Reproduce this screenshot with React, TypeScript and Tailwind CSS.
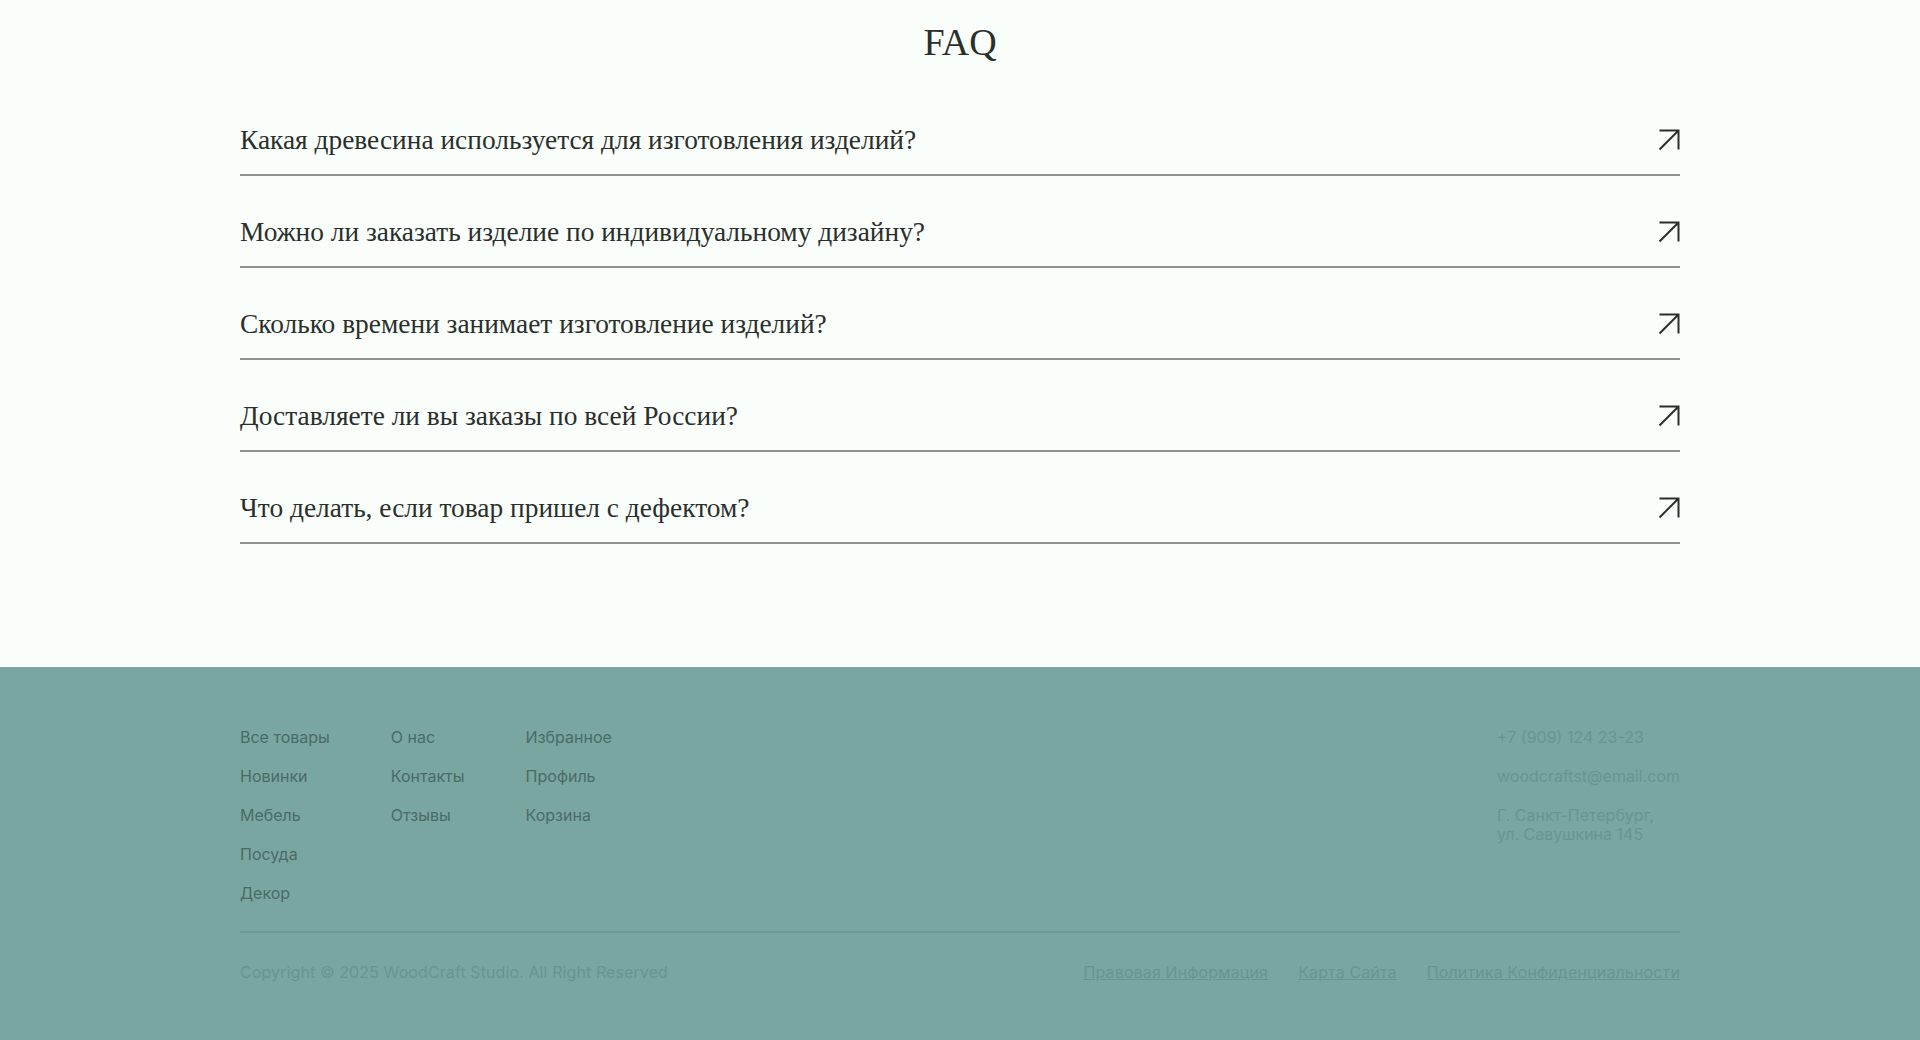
import React from 'react'

const questions = [
    'Какая древесина используется для изготовления изделий?',
    'Можно ли заказать изделие по индивидуальному дизайну?',
    'Сколько времени занимает изготовление изделий?',
    'Доставляете ли вы заказы по всей России?',
    'Что делать, если товар пришел с дефектом?',
]

const footerCols = [
    ['Все товары', 'Новинки', 'Мебель', 'Посуда', 'Декор'],
    ['О нас', 'Контакты', 'Отзывы'],
    ['Избранное', 'Профиль', 'Корзина'],
]

function ArrowIcon() {
    return (
        <svg width="22" height="22" viewBox="0 0 22 22" fill="none" className="shrink-0">
            <path d="M1.5 20.5 L20.5 1.5 M1.5 1.5 H20.5 V20.5" stroke="#2b2f2c" strokeWidth="2" />
        </svg>
    )
}

export default function App() {
    return (
        <div className="min-h-screen bg-[#f9fefa] font-['Inter',sans-serif]">
            {/* FAQ */}
            <section className="pt-5 pb-[123px]">
                <h1 className="text-center text-[38px] leading-[44px] text-[#2b2f2c] mb-5 font-['Liberation_Serif',serif]">
                    FAQ
                </h1>
                <div className="w-[1440px] mx-auto">
                    {questions.map(q => (
                        <div
                            key={q}
                            className="flex items-center justify-between pt-[40px] pb-[18px] border-b-2 border-[#8e938e]"
                        >
                            <span className="text-[27.4px] leading-[32px] text-[#2b2f2c] font-['Liberation_Serif',serif]">
                                {q}
                            </span>
                            <ArrowIcon />
                        </div>
                    ))}
                </div>
            </section>

            {/* Footer */}
            <footer className="bg-[#79a6a0] pt-[60px] pb-[60px]">
                <div className="w-[1440px] mx-auto">
                    <div className="flex justify-between">
                        <div className="flex gap-[61px]">
                            {footerCols.map((col, i) => (
                                <ul key={i} className="flex flex-col gap-[19px]">
                                    {col.map(item => (
                                        <li key={item} className="text-base leading-5 text-[#4b6b66]">
                                            {item}
                                        </li>
                                    ))}
                                </ul>
                            ))}
                        </div>
                        <div className="flex flex-col gap-[19px] text-base leading-5 text-[#6a958f]">
                            <span>+7 (909) 124 23-23</span>
                            <span>woodcraftst@email.com</span>
                            <span className="leading-[19px] pt-[1px]">
                                Г. Санкт-Петербург,<br />ул. Савушкина 145
                            </span>
                        </div>
                    </div>

                    <div className="mt-[28px] border-t-2 border-[#6f9b95]" />

                    <div className="flex justify-between items-center mt-[29px] text-base leading-5 text-[#6a958f] tracking-[0.1px]">
                        <span>Copyright © 2025 WoodCraft Studio. All Right Reserved</span>
                        <div className="flex gap-[30px] tracking-[0.14px]">
                            <a className="underline">Правовая Информация</a>
                            <a className="underline">Карта Сайта</a>
                            <a className="underline">Политика Конфиденциальности</a>
                        </div>
                    </div>
                </div>
            </footer>
        </div>
    )
}
